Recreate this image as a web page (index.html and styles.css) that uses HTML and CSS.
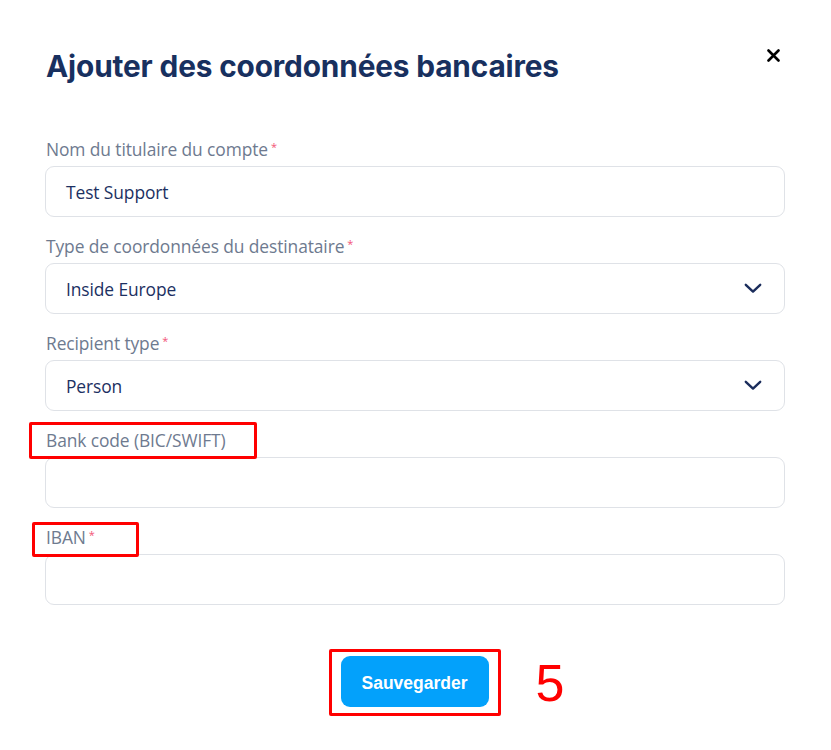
FILE: index.html
```html
<!DOCTYPE html>
<html lang="fr">
<head>
<meta charset="utf-8">
<title>Ajouter des coordonnées bancaires</title>
<link rel="stylesheet" href="styles.css">
</head>
<body>
<div class="modal">
  <div class="header">
    <h1 class="title">Ajouter des coordonnées bancaires</h1>
    <button class="close" aria-label="Fermer">
      <svg width="13" height="13" viewBox="0 0 13 13"><path d="M1.5 1.5 L11.5 11.5 M11.5 1.5 L1.5 11.5" stroke="#000" stroke-width="2.6" stroke-linecap="round"/></svg>
    </button>
  </div>
  <form class="form">
    <div class="field">
      <label class="label">Nom du titulaire du compte<span class="req">*</span></label>
      <div class="input">Test Support</div>
    </div>
    <div class="field">
      <label class="label">Type de coordonnées du destinataire<span class="req">*</span></label>
      <div class="input select">Inside Europe
        <svg class="chev" width="18" height="11" viewBox="0 0 18 11"><path d="M1.8 1.8 L9 8.6 L16.2 1.8" fill="none" stroke="#1b2d5c" stroke-width="2.4" stroke-linecap="round" stroke-linejoin="round"/></svg>
      </div>
    </div>
    <div class="field">
      <label class="label">Recipient type<span class="req">*</span></label>
      <div class="input select">Person
        <svg class="chev" width="18" height="11" viewBox="0 0 18 11"><path d="M1.8 1.8 L9 8.6 L16.2 1.8" fill="none" stroke="#1b2d5c" stroke-width="2.4" stroke-linecap="round" stroke-linejoin="round"/></svg>
      </div>
    </div>
    <div class="field">
      <label class="label">Bank code (BIC/SWIFT)</label>
      <div class="input"></div>
      <span class="mark mark-bic"></span>
    </div>
    <div class="field">
      <label class="label">IBAN<span class="req">*</span></label>
      <div class="input"></div>
      <span class="mark mark-iban"></span>
    </div>
    <div class="actions">
      <div class="btn-wrap">
        <button type="button" class="save">Sauvegarder</button>
        <span class="mark mark-btn"></span>
        <span class="step">5</span>
      </div>
    </div>
  </form>
</div>
</body>
</html>
```

FILE: styles.css
```css
html, body {
  margin: 0;
  padding: 0;
  background: #ffffff;
}
body {
  width: 831px;
  height: 750px;
  overflow: hidden;
  font-family: "Open Sans", "Noto Sans", sans-serif;
}
.modal {
  padding: 0 46px 0 45px;
}
.header {
  display: flex;
  align-items: flex-start;
  justify-content: space-between;
  padding-top: 47px;
}
.title {
  margin: 0 0 0 1px;
  font-family: Inter, sans-serif;
  font-weight: 700;
  font-size: 29.8px;
  line-height: 38px;
  color: #18305f;
  letter-spacing: -0.15px;
}
.close {
  border: 0;
  background: none;
  padding: 0;
  margin: 2px 5px 0 0;
  width: 13px;
  height: 13px;
  display: flex;
}
.form {
  margin-top: 53px;
  display: flex;
  flex-direction: column;
  gap: 18px;
}
.field {
  position: relative;
  display: flex;
  flex-direction: column;
  gap: 8px;
}
.label {
  height: 20px;
  line-height: 23px;
  font-size: 17.4px;
  color: #6e7a8f;
  padding-left: 1px;
  letter-spacing: -0.1px;
}
.req {
  color: #f25577;
  margin-left: 3px;
  font-size: 11px;
  line-height: 11px;
  vertical-align: top;
  position: relative;
  top: 3px;
}
.input {
  box-sizing: border-box;
  height: 51px;
  border: 1px solid #dfe2e7;
  border-radius: 9px;
  padding: 0 20px;
  display: flex;
  align-items: center;
  justify-content: space-between;
  font-size: 17.4px;
  color: #1c3062;
  letter-spacing: -0.1px;
}
.chev {
  margin-right: 2px;
}
.mark {
  position: absolute;
  border: 3px solid #ff0000;
  box-sizing: border-box;
  border-radius: 2px;
}
.mark-bic {
  left: -16px;
  top: -7px;
  width: 228px;
  height: 37px;
}
.mark-iban {
  left: -13px;
  top: -4px;
  width: 107px;
  height: 35px;
}
.actions {
  display: flex;
  justify-content: center;
  margin-top: 33px;
  padding-right: 1px;
}
.btn-wrap {
  position: relative;
}
.save {
  width: 148px;
  height: 51px;
  border: 0;
  border-radius: 9px;
  background: #03a1fb;
  color: #ffffff;
  font-family: "Liberation Sans", Arial, sans-serif;
  font-weight: 700;
  font-size: 17.5px;
  padding: 4px 0 0;
  display: block;
}
.mark-btn {
  left: -12px;
  top: -7px;
  width: 172px;
  height: 67px;
}
.step {
  position: absolute;
  left: 195px;
  top: -3px;
  font-family: "Liberation Sans", Arial, sans-serif;
  font-size: 52px;
  line-height: 60px;
  color: #ff0000;
}
```
